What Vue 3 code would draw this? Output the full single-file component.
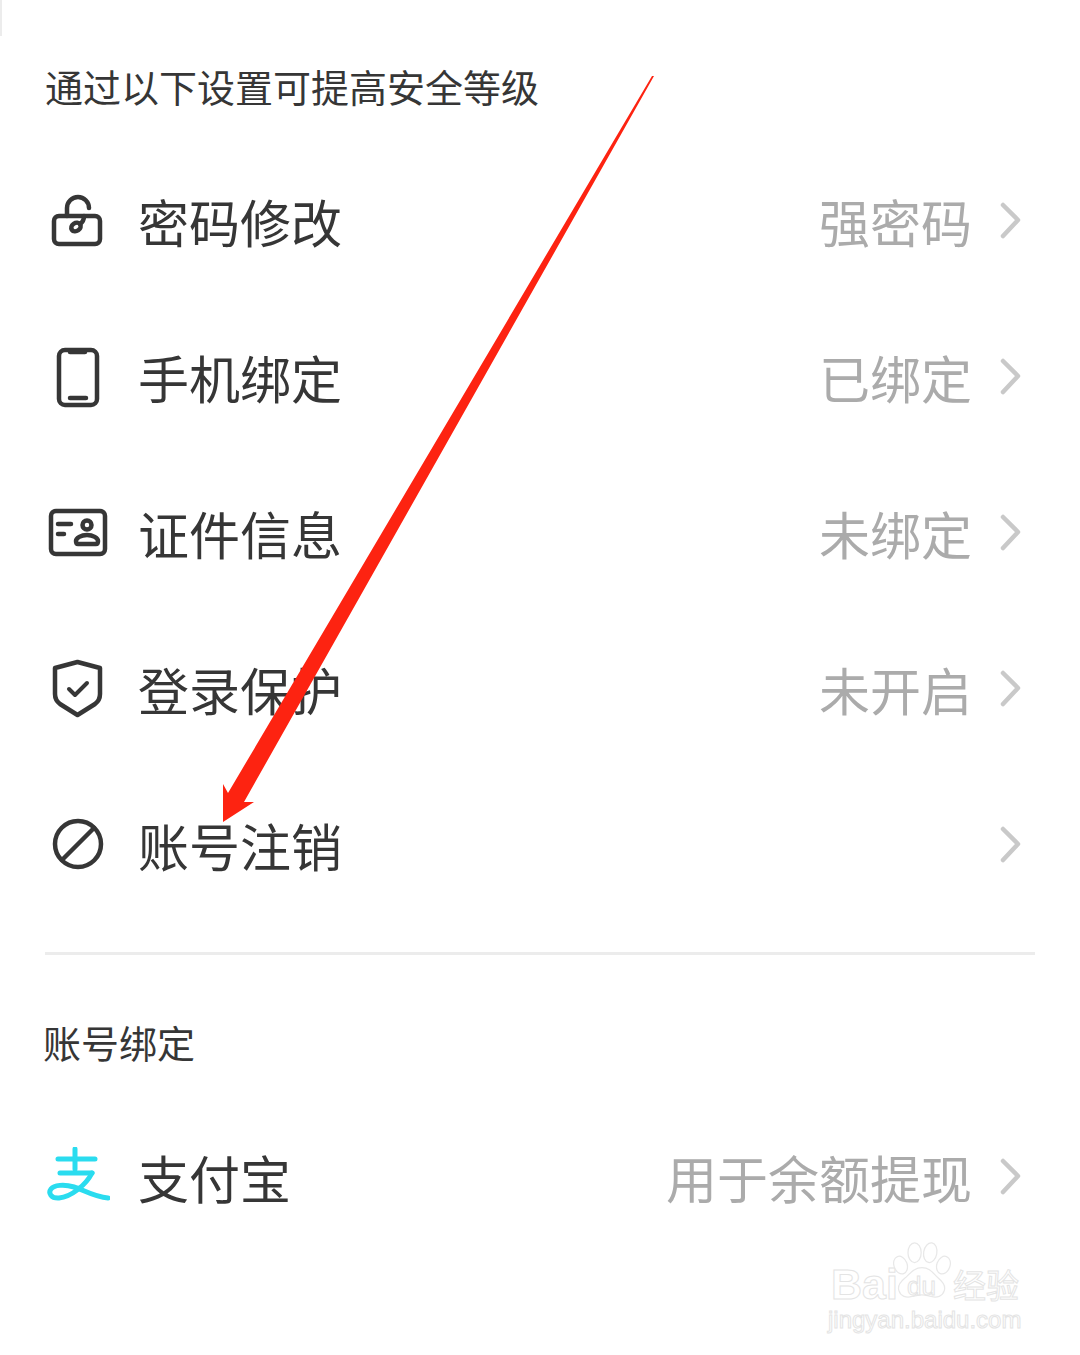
<template>
  <div class="page">
    <div class="edge-mark"></div>
    <div class="heading">通过以下设置可提高安全等级</div>

    <div class="list">
      <div v-for="item in securityItems" :key="item.label" class="row">
        <span class="row-icon">
          <svg v-if="item.icon === 'lock'" viewBox="0 0 64 64" class="icon">
            <rect x="8" y="25" width="46" height="28" rx="5" />
            <path d="M21 25V17a11 11 0 0 1 22 0" />
            <ellipse cx="30" cy="36" rx="5" ry="4" transform="rotate(-35 30 36)" />
            <path d="M34 33c3-2 4-5 4-8" />
          </svg>
          <svg v-else-if="item.icon === 'phone'" viewBox="0 0 64 64" class="icon">
            <rect x="13" y="3" width="38" height="55" rx="6" />
            <path d="M24 5h15M24 51h16" />
          </svg>
          <svg v-else-if="item.icon === 'card'" viewBox="0 0 64 64" class="icon">
            <rect x="5" y="8" width="54" height="43" rx="5" />
            <path d="M12 21h13M12 31h6" />
            <circle cx="41" cy="22" r="4.500" />
            <path d="M30 38c0-3 5-6 11-6s11 3 11 6c0 2-1 3-2 3H32c-1 0-2-1-2-3z" />
          </svg>
          <svg v-else-if="item.icon === 'shield'" viewBox="0 0 64 64" class="icon">
            <path d="M31.500 3L54 9v26c0 4-1 7-5 10L31.500 56 14 45c-4-3-5-6-5-10V9z" />
            <path class="thin" d="M23 30l6 6 12-12" />
          </svg>
          <svg v-else viewBox="0 0 64 64" class="icon">
            <circle cx="32" cy="29" r="23" />
            <path d="M16 45L48 13" />
          </svg>
        </span>
        <span class="row-label">{{ item.label }}</span>
        <span class="row-value">{{ item.value }}</span>
        <svg viewBox="0 0 24 40" class="chevron"><path d="M4 4l15 15L4 35" /></svg>
      </div>
    </div>

    <div class="divider"></div>
    <div class="section-title">账号绑定</div>

    <div class="row">
      <span class="row-icon">
        <svg viewBox="0 0 64 64" class="icon alipay">
          <path d="M29 2v20M12 12h37M14 26h32" />
          <path d="M46 26C40 38 25 50 13 51 5 51.500 2 46 5 42c3-4 13-5 23-2 10 3 20 10 34 11" />
        </svg>
      </span>
      <span class="row-label">支付宝</span>
      <span class="row-value">用于余额提现</span>
      <svg viewBox="0 0 24 40" class="chevron"><path d="M4 4l15 15L4 35" /></svg>
    </div>

    <!-- 标注箭头 -->
    <svg class="arrow" viewBox="0 0 1080 1355">
      <polygon points="652,76 654,76 244,802 254,802 223,822 223,784 228,793" fill="#fd2311" />
    </svg>

    <!-- 水印 -->
    <div class="watermark">
      <div class="wm-top">
        <span class="wm-bai">Bai</span>
        <span class="wm-cn">经验</span>
      </div>
      <svg class="paw" viewBox="0 0 80 76">
        <ellipse cx="14" cy="29" rx="8" ry="11" transform="rotate(-20 14 29)" />
        <ellipse cx="31" cy="14" rx="8" ry="12" />
        <ellipse cx="50" cy="14" rx="8" ry="12" transform="rotate(10 50 14)" />
        <ellipse cx="66" cy="29" rx="8" ry="11" transform="rotate(20 66 29)" />
        <path d="M40 32c10 0 14 8 20 13 6 5 9 9 7 15-2 7-9 9-16 7-5-1-7-2-11-2s-7 1-12 2c-7 2-14 0-16-7-2-6 1-10 7-15 6-5 11-13 21-13z" />
      </svg>
      <span class="wm-du">du</span>
      <div class="wm-url">jingyan.baidu.com</div>
    </div>
  </div>
</template>

<script setup>
const securityItems = [
  { icon: 'lock', label: '密码修改', value: '强密码' },
  { icon: 'phone', label: '手机绑定', value: '已绑定' },
  { icon: 'card', label: '证件信息', value: '未绑定' },
  { icon: 'shield', label: '登录保护', value: '未开启' },
  { icon: 'ban', label: '账号注销', value: '' }
]
</script>

<style>
html,
body {
  margin: 0;
  background: #fff;
}
</style>

<style scoped>
.page {
  position: relative;
  width: 1080px;
  height: 1355px;
  box-sizing: border-box;
  padding-top: 62px;
  overflow: hidden;
  background: #fff;
  color: #363636;
  font-family: "Noto Sans CJK SC", "Noto Sans", sans-serif;
}

.edge-mark {
  position: absolute;
  left: 0;
  top: 0;
  width: 2px;
  height: 36px;
  background: #ececec;
}

.heading,
.section-title {
  padding-left: 45px;
  font-size: 38px;
  line-height: 48px;
}

.section-title {
  padding-left: 43px;
  margin-top: 63px;
  margin-bottom: 35px;
}

.list {
  margin-top: 35px;
}

.row {
  display: flex;
  align-items: center;
  height: 156px;
  padding-left: 46px;
  padding-right: 57px;
}

.row-icon {
  display: flex;
  width: 92px;
  flex-shrink: 0;
}

.icon {
  width: 64px;
  height: 64px;
  fill: none;
  stroke: #363636;
  stroke-width: 4.500;
  stroke-linecap: round;
  stroke-linejoin: round;
}

.icon .thin {
  stroke-width: 4;
}

.alipay {
  stroke: #2adcef;
  stroke-width: 5;
}

.row-label {
  flex: 1;
  padding-bottom: 5px;
  font-size: 51px;
  line-height: 60px;
}

.row-value {
  padding-bottom: 5px;
  font-size: 51px;
  line-height: 60px;
  color: #ababab;
}

.chevron {
  width: 24px;
  height: 40px;
  margin-left: 27px;
  margin-top: -4px;
  fill: none;
  stroke: #c9c9c9;
  stroke-width: 4.500;
  stroke-linecap: round;
  stroke-linejoin: round;
}

.divider {
  height: 3px;
  margin: 27px 45px 0;
  background: #ececec;
}

.arrow {
  position: absolute;
  left: 0;
  top: 0;
  width: 1080px;
  height: 1355px;
  pointer-events: none;
}

.watermark {
  position: absolute;
  left: 828px;
  top: 1240px;
  width: 200px;
  height: 92px;
  color: #fff;
  font-family: "Liberation Sans", sans-serif;
  -webkit-text-stroke: 1px #e4e4e4;
}

.paw {
  position: absolute;
  left: 61px;
  top: 0;
  width: 66px;
  height: 65px;
  fill: #fff;
  stroke: #e8e8e8;
  stroke-width: 1.500;
}

.wm-top {
  position: absolute;
  left: 0;
  top: 22px;
  width: 100%;
  height: 44px;
}

.wm-bai {
  position: absolute;
  left: 3px;
  top: 0;
  font-size: 43px;
  line-height: 44px;
  font-weight: 700;
}

.wm-du {
  position: absolute;
  left: 79px;
  top: 31px;
  font-size: 26px;
  line-height: 30px;
}

.wm-cn {
  position: absolute;
  left: 125px;
  top: 2px;
  font-size: 33px;
  line-height: 40px;
  font-family: "Noto Sans CJK SC", sans-serif;
}

.wm-url {
  position: absolute;
  left: 0;
  top: 67px;
  font-size: 24px;
  line-height: 26px;
  white-space: nowrap;
}
</style>
